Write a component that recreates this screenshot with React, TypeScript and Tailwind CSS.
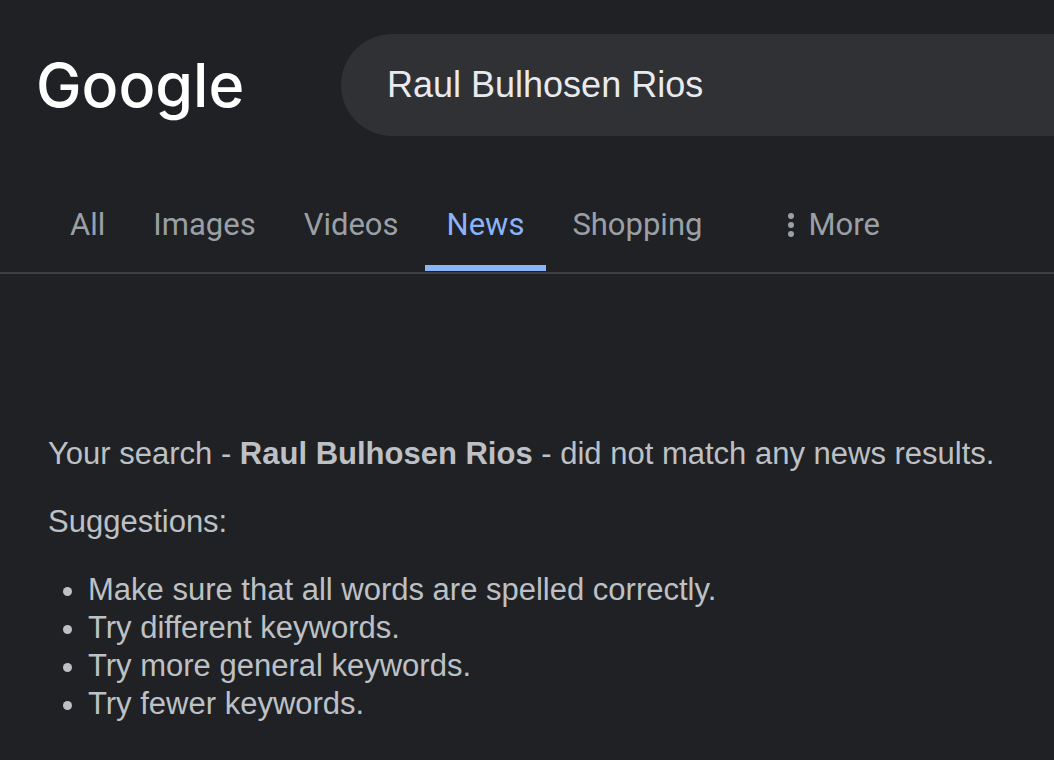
import { useState } from "react";

const QUERY = "Raul Bulhosen Rios";

const TABS = ["All", "Images", "Videos", "News", "Shopping"];

const SUGGESTIONS = [
  "Make sure that all words are spelled correctly.",
  "Try different keywords.",
  "Try more general keywords.",
  "Try fewer keywords.",
];

function DotsIcon() {
  return (
    <svg viewBox="0 0 6 24" className="w-[6px] h-[24px]" fill="currentColor" aria-hidden="true">
      <circle cx="3" cy="3" r="3" />
      <circle cx="3" cy="12" r="3" />
      <circle cx="3" cy="21" r="3" />
    </svg>
  );
}

export default function App() {
  const [query, setQuery] = useState(QUERY);
  const [active, setActive] = useState("News");

  return (
    <div className="min-h-screen overflow-x-hidden bg-[#202124] text-[#bdc1c6] font-['Liberation_Sans',Arial,sans-serif]">
      <header className="flex items-center pt-[34px] pl-9">
        <a href="#" className="w-[305px] shrink-0 text-[61px] leading-[76px] font-medium text-white font-['Inter',sans-serif]">
          Google
        </a>
        <form className="flex-1 min-w-0" onSubmit={e => e.preventDefault()}>
          <input
            type="text"
            aria-label="Search"
            value={query}
            onChange={e => setQuery(e.target.value)}
            className="block w-full h-[102px] pl-[46px] pr-6 rounded-l-full bg-[#303134] text-[36px] text-[#e8eaed] outline-none"
          />
        </form>
      </header>

      {/* Search type tabs */}
      <nav className="mt-[50px] pl-12 flex gap-1 border-b-2 border-[#3c4043] text-[31px] leading-[38px] text-[#9aa0a6] font-['Roboto',sans-serif]">
        {TABS.map(t => (
          <a
            key={t}
            href="#"
            onClick={() => setActive(t)}
            className={`px-[22px] pt-[20px] pb-[21px] mb-px border-b-6 ${active === t ? "border-[#8ab4f8] text-[#8ab4f8]" : "border-transparent"}`}
          >
            {t}
          </a>
        ))}
        <button type="button" className="ml-[60px] pt-[20px] pb-[28px] flex items-center gap-[14px]">
          <DotsIcon />
          More
        </button>
      </nav>

      {/* No results message */}
      <main className="pl-12 pr-6 pt-[161px] pb-9 text-[31px] leading-[38px]">
        <p>
          Your search - <b>{QUERY}</b> - did not match any news results.
        </p>
        <p className="mt-[30px]">Suggestions:</p>
        <ul className="mt-[30px] pl-10 list-disc">
          {SUGGESTIONS.map(s => (
            <li key={s}>{s}</li>
          ))}
        </ul>
      </main>
    </div>
  );
}
